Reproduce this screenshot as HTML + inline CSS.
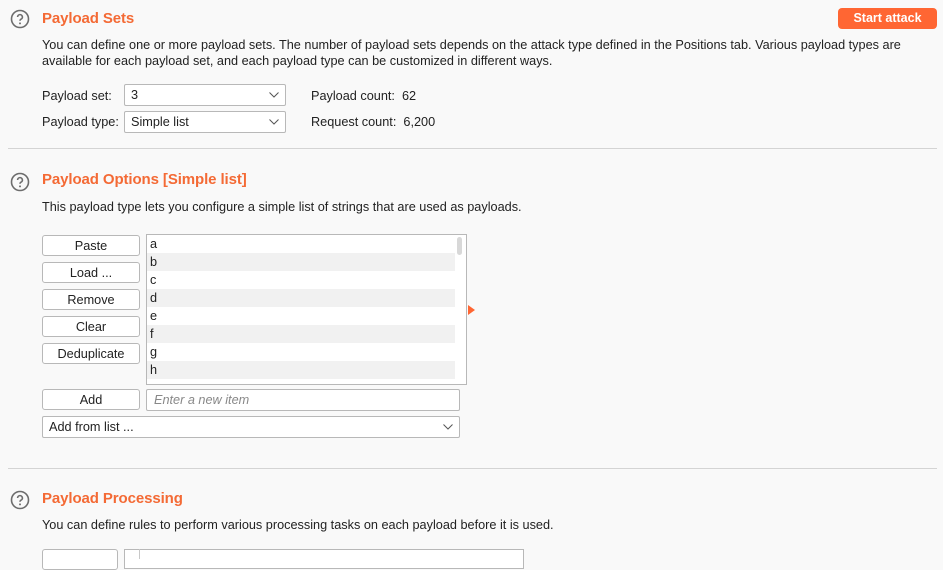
<!DOCTYPE html>
<html><head><style>
*{box-sizing:border-box;margin:0;padding:0}
body{width:943px;height:555px;overflow:hidden;background:#f9f9f9;font-family:"Liberation Sans",sans-serif;font-size:12.7px;color:#222;position:relative}
.a{position:absolute;white-space:nowrap}
.t{font-size:15px;font-weight:bold;color:#f46a35;letter-spacing:-0.1px}
.q{position:absolute;width:20px;height:20px}
.btn{position:absolute;border:1px solid #b8b8b8;border-radius:3px;background:#fff;text-align:center;line-height:20px;height:21px}
.sel{position:absolute;border:1px solid #b8b8b8;border-radius:2px;background:#fff;height:22px;line-height:21px;padding-left:6px}
.sel svg{position:absolute;right:6px;top:7px}
.sep{position:absolute;left:8px;width:929px;height:1px;background:#d4d4d4}
.row{position:absolute;left:147px;width:308px;height:18px;line-height:19px;padding-left:3px}
.s{background:#f1f1f1}
</style></head><body>
<svg class="q" style="left:10px;top:9px" viewBox="0 0 20 20"><circle cx="10" cy="10" r="8.5" fill="none" stroke="#6d6d6d" stroke-width="1.6"/><path d="M7.6 8a2.4 2.4 0 1 1 3.4 2.2c-.8.4-1 .9-1 1.6" fill="none" stroke="#6d6d6d" stroke-width="1.6"/><circle cx="10" cy="14.4" r="1" fill="#6d6d6d"/></svg>
<div class="a t" style="left:42px;top:10px">Payload Sets</div>
<div class="a" style="left:838px;top:8px;width:99px;height:21px;background:#ff6633;border-radius:4px;color:#fff;font-weight:bold;text-align:center;line-height:21px;font-size:12.5px">Start attack</div>
<div class="a" style="left:42px;top:38px">You can define one or more payload sets. The number of payload sets depends on the attack type defined in the Positions tab. Various payload types are</div>
<div class="a" style="left:42px;top:54px">available for each payload set, and each payload type can be customized in different ways.</div>
<div class="a" style="left:42px;top:89px">Payload set:</div>
<div class="sel" style="left:124px;top:84px;width:162px">3<svg width="10" height="6"><path d="M0.5 0.5L5 5L9.5 0.5" fill="none" stroke="#555"/></svg></div>
<div class="a" style="left:311px;top:89px">Payload count:&nbsp; 62</div>
<div class="a" style="left:42px;top:115px">Payload type:</div>
<div class="sel" style="left:124px;top:111px;width:162px">Simple list<svg width="10" height="6"><path d="M0.5 0.5L5 5L9.5 0.5" fill="none" stroke="#555"/></svg></div>
<div class="a" style="left:311px;top:115px">Request count:&nbsp; 6,200</div>
<div class="sep" style="top:148px"></div>

<svg class="q" style="left:10px;top:172px" viewBox="0 0 20 20"><circle cx="10" cy="10" r="8.5" fill="none" stroke="#6d6d6d" stroke-width="1.6"/><path d="M7.6 8a2.4 2.4 0 1 1 3.4 2.2c-.8.4-1 .9-1 1.6" fill="none" stroke="#6d6d6d" stroke-width="1.6"/><circle cx="10" cy="14.4" r="1" fill="#6d6d6d"/></svg>
<div class="a t" style="left:42px;top:171px">Payload Options [Simple list]</div>
<div class="a" style="left:42px;top:200px">This payload type lets you configure a simple list of strings that are used as payloads.</div>
<div class="btn" style="left:42px;top:235px;width:98px">Paste</div>
<div class="btn" style="left:42px;top:262px;width:98px">Load ...</div>
<div class="btn" style="left:42px;top:289px;width:98px">Remove</div>
<div class="btn" style="left:42px;top:316px;width:98px">Clear</div>
<div class="btn" style="left:42px;top:343px;width:98px">Deduplicate</div>
<div class="a" style="left:146px;top:234px;width:321px;height:151px;border:1px solid #b8b8b8;background:#fff"></div>
<div class="row" style="top:235px">a</div>
<div class="row s" style="top:253px">b</div>
<div class="row" style="top:271px">c</div>
<div class="row s" style="top:289px">d</div>
<div class="row" style="top:307px">e</div>
<div class="row s" style="top:325px">f</div>
<div class="row" style="top:343px">g</div>
<div class="row s" style="top:361px">h</div>
<div class="a" style="left:457px;top:237px;width:5px;height:18px;background:#d8d8d8;border-radius:3px"></div>
<svg class="a" style="left:468px;top:305px" width="8" height="10"><path d="M0 0L7 5L0 10Z" fill="#ff6633"/></svg>
<div class="btn" style="left:42px;top:389px;width:98px">Add</div>
<div class="a" style="left:146px;top:389px;width:314px;height:22px;border:1px solid #b8b8b8;border-radius:2px;background:#fff;padding-left:7px;line-height:21px;color:#888;font-style:italic">Enter a new item</div>
<div class="sel" style="left:42px;top:416px;width:418px">Add from list ...<svg width="10" height="6"><path d="M0.5 0.5L5 5L9.5 0.5" fill="none" stroke="#555"/></svg></div>
<div class="sep" style="top:468px"></div>

<svg class="q" style="left:10px;top:490px" viewBox="0 0 20 20"><circle cx="10" cy="10" r="8.5" fill="none" stroke="#6d6d6d" stroke-width="1.6"/><path d="M7.6 8a2.4 2.4 0 1 1 3.4 2.2c-.8.4-1 .9-1 1.6" fill="none" stroke="#6d6d6d" stroke-width="1.6"/><circle cx="10" cy="14.4" r="1" fill="#6d6d6d"/></svg>
<div class="a t" style="left:42px;top:490px">Payload Processing</div>
<div class="a" style="left:42px;top:518px">You can define rules to perform various processing tasks on each payload before it is used.</div>
<div class="btn" style="left:42px;top:549px;width:76px"></div>
<div class="a" style="left:124px;top:549px;width:400px;height:20px;border:1px solid #b8b8b8;background:#fff"></div>
<div class="a" style="left:139px;top:549px;width:1px;height:10px;background:#c8c8c8"></div>
</body></html>
